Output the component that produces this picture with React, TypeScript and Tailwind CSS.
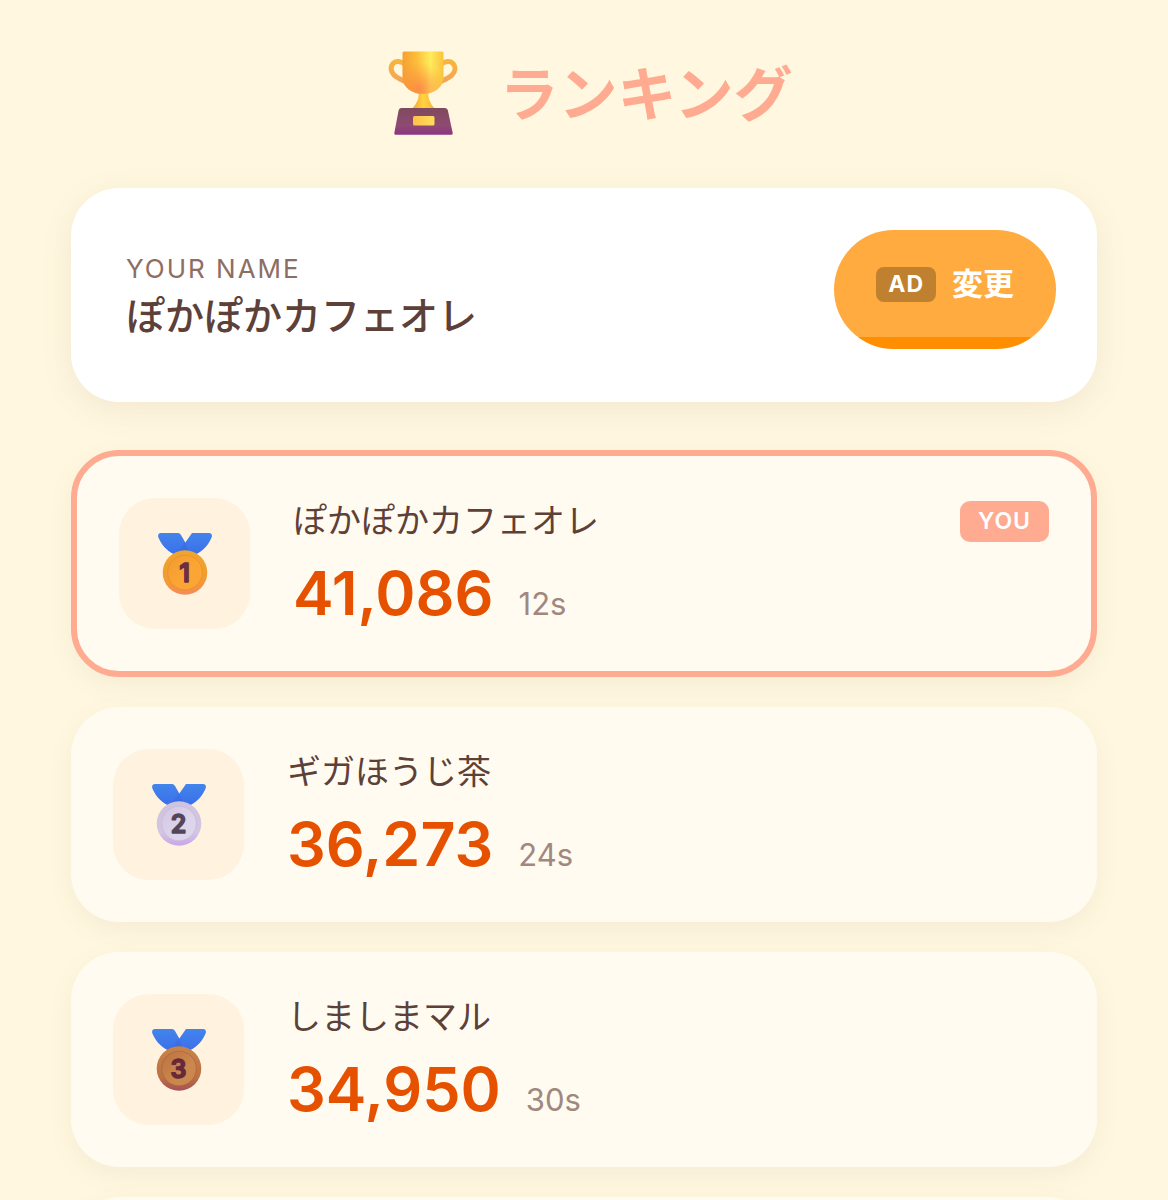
type Entry = {
    rank: number;
    name: string;
    score: number;
    seconds: number;
    you?: boolean;
};

const entries: Entry[] = [
    { rank: 1, name: "ぽかぽかカフェオレ", score: 41086, seconds: 12, you: true },
    { rank: 2, name: "ギガほうじ茶", score: 36273, seconds: 24 },
    { rank: 3, name: "しましまマル", score: 34950, seconds: 30 },
];

const medals = [
    { light: "#FBA634", dark: "#F39A32", rim: "#EFA52C", edge: "#F58A5A", line: "#E58A2C", digit: "#6B2F45" },
    { light: "#DDD5EA", dark: "#D3C6E4", rim: "#CFC3DD", edge: "#C9A4EC", line: "#C3B4D8", digit: "#53465A" },
    { light: "#CB874D", dark: "#BC7142", rim: "#C98347", edge: "#A64F58", line: "#A5603A", digit: "#66293A" },
];

function Trophy() {
    return (
        <svg viewBox="0 0 68 84" className="h-[84px] w-24 shrink-0" aria-hidden="true">
            <defs>
                <linearGradient id="cup" x1="0" y1="0" x2="1" y2="0">
                    <stop offset="0" stopColor="#F5A032" />
                    <stop offset="0.35" stopColor="#FDBE3A" />
                    <stop offset="0.68" stopColor="#FFEC5C" />
                    <stop offset="1" stopColor="#FBC23C" />
                </linearGradient>
                <radialGradient id="cupShade" cx="0.4" cy="0.9" r="0.65">
                    <stop offset="0" stopColor="#FA8248" stopOpacity="0.85" />
                    <stop offset="1" stopColor="#FA8A40" stopOpacity="0" />
                </radialGradient>
                <linearGradient id="handle" x1="0" y1="0" x2="0" y2="1">
                    <stop offset="0" stopColor="#F7B53C" />
                    <stop offset="1" stopColor="#F5A455" />
                </linearGradient>
                <linearGradient id="stem" x1="0" y1="0" x2="1" y2="0">
                    <stop offset="0" stopColor="#F8A437" />
                    <stop offset="0.5" stopColor="#FFD23F" />
                    <stop offset="1" stopColor="#F9B13B" />
                </linearGradient>
                <linearGradient id="base" x1="0" y1="0" x2="0" y2="1">
                    <stop offset="0" stopColor="#7F4A5D" />
                    <stop offset="0.65" stopColor="#8F4A72" />
                    <stop offset="1" stopColor="#8A3485" />
                </linearGradient>
                <linearGradient id="plate" x1="0" y1="0" x2="1" y2="0">
                    <stop offset="0" stopColor="#FFC04A" />
                    <stop offset="1" stopColor="#FFDE5A" />
                </linearGradient>
            </defs>
            <path d="M16 13C12 10 7 9.500 4.500 12C1 15.500 1.500 20.500 5 24C8 27 12 28.500 17 31" fill="none" stroke="url(#handle)" strokeWidth="5" strokeLinecap="round" />
            <path d="M52 13C56 10 61 9.500 63.500 12C67 15.500 66.500 20.500 63 24C60 27 56 28.500 51 31" fill="none" stroke="url(#handle)" strokeWidth="5" strokeLinecap="round" />
            <path d="M29.500 40H39.500C38.500 47 41 52 46 58H23C28 52 30.500 47 29.500 40Z" fill="url(#stem)" />
            <path d="M13.500 2Q13.500.5 15 .5H53Q54.500.5 54.500 2V26C54.500 36 45.500 43 34 43S13.500 36 13.500 26Z" fill="url(#cup)" />
            <path d="M13.500 2Q13.500.5 15 .5H53Q54.500.5 54.500 2V26C54.500 36 45.500 43 34 43S13.500 36 13.500 26Z" fill="url(#cupShade)" />
            <path d="M12.500 57H55.500Q58.500 57 59 60L63.700 82Q64 83.700 62.500 83.700H6.500Q5 83.700 5.300 82L9.500 60Q10 57 12.500 57Z" fill="url(#base)" />
            <rect x="24" y="65" width="21.500" height="9.500" rx="1.500" fill="url(#plate)" />
        </svg>
    );
}

function Medal({ rank }: { rank: number }) {
    const c = medals[rank - 1];
    return (
        <svg viewBox="0 0 54 62" className="h-[62px] w-[54px]" role="img" aria-label={`Rank ${rank}`}>
            <defs>
                <linearGradient id={`ribbon${rank}`} x1="0" y1="0" x2="0" y2="1">
                    <stop offset="0" stopColor="#4385EC" />
                    <stop offset="1" stopColor="#3B6FEA" />
                </linearGradient>
                <linearGradient id={`rim${rank}`} x1="0" y1="0" x2="0" y2="1">
                    <stop offset="0" stopColor={c.rim} />
                    <stop offset="0.7" stopColor={c.dark} />
                    <stop offset="1" stopColor={c.edge} />
                </linearGradient>
                <linearGradient id={`face${rank}`} x1="0" y1="0" x2="1" y2="1">
                    <stop offset="0" stopColor={c.dark} />
                    <stop offset="0.6" stopColor={c.light} />
                    <stop offset="1" stopColor={c.light} />
                </linearGradient>
            </defs>
            <path d="M34 0H51Q54.500 0 53.800 4C51 11 46 17 38.500 21H16L27 10Z" fill={`url(#ribbon${rank})`} />
            <path d="M3 0H20Q22 0 23 2L27 9L31 13L21 21H15.500C8 17 3 11 .2 4Q-.4 0 3 0Z" fill={`url(#ribbon${rank})`} />
            <path d="M27 9.500L20 19H31Z" fill="#3564DC" opacity="0.4" />
            <circle cx="27" cy="39.500" r="22.300" fill={`url(#rim${rank})`} />
            <circle cx="27" cy="39.500" r="17.300" fill={`url(#face${rank})`} stroke={c.line} strokeOpacity="0.6" strokeWidth="1" />
            <text
                x="26.500"
                y="48.500"
                textAnchor="middle"
                fontSize="25"
                fill={c.digit}
                stroke={c.digit}
                strokeWidth="1.500"
                strokeLinejoin="round"
                className="font-['Inter',sans-serif] font-semibold"
            >
                {rank}
            </text>
        </svg>
    );
}

function NameCard() {
    return (
        <section className="flex items-start justify-between rounded-[48px] bg-white pt-[42px] pr-[41px] pb-[53px] pl-[55px] shadow-[0_8px_32px_rgba(141,110,99,0.10)]">
            <div className="pt-6">
                <p className="text-[26px] leading-[30px] tracking-[2px] text-[#8D6E63]">YOUR NAME</p>
                <p className="mt-2 text-[39px] leading-[48px] font-medium text-[#5D4037]">ぽかぽかカフェオレ</p>
            </div>
            <button
                type="button"
                className="flex items-center gap-4 rounded-full bg-[linear-gradient(to_top,#FF8F00_12px,#FFAB40_12px)] px-[42px] pt-[30px] pb-[41px] text-white"
            >
                <span className="rounded-lg bg-black/25 px-3 text-[23px] leading-[35px] font-bold tracking-[1px]">AD</span>
                <span className="text-[31px] leading-[48px] font-bold">変更</span>
            </button>
        </section>
    );
}

function Row({ entry }: { entry: Entry }) {
    return (
        <li
            className={`flex items-start gap-[43px] rounded-[48px] bg-[#FFFBF0] p-[42px] shadow-[0_8px_24px_rgba(141,110,99,0.08)] ${
                entry.you ? "border-[6px] border-[#FFAB91]" : ""
            }`}
        >
            <div className="flex size-[131px] shrink-0 items-center justify-center rounded-[36px] bg-[#FFF2DF]">
                <Medal rank={entry.rank} />
            </div>
            <div className="flex-1">
                <div className="flex items-center justify-between">
                    <h2 className="text-[34px] leading-[46px] text-[#5D4037]">{entry.name}</h2>
                    {entry.you && (
                        <span className="rounded-[10px] bg-[#FFAB91] px-[18px] text-[23px] leading-[41px] font-semibold tracking-[1px] text-white">
                            YOU
                        </span>
                    )}
                </div>
                <p className="mt-4 flex items-baseline gap-[25px]">
                    <span className="text-[61px] leading-[66px] font-semibold text-[#E65100]">
                        {entry.score.toLocaleString("en-US")}
                    </span>
                    <span className="text-[31px] leading-8 text-[#A1887F]">{entry.seconds}s</span>
                </p>
            </div>
        </li>
    );
}

export default function App() {
    return (
        <main className="h-screen overflow-hidden bg-[#FFF7DF] px-[71px] pt-12 font-['Inter','Noto_Sans_CJK_JP',sans-serif]">
            <header className="flex h-[90px] items-center justify-center gap-7">
                <Trophy />
                <h1 className="pt-1 text-[59px] leading-[72px] font-bold text-[#FFAB91]">ランキング</h1>
            </header>
            <div className="mt-[50px]">
                <NameCard />
                <ol className="mt-12 flex flex-col gap-[30px]">
                    {entries.map((entry) => (
                        <Row key={entry.rank} entry={entry} />
                    ))}
                    <li className="h-[215px] rounded-[48px] bg-[#FFFBF0] shadow-[0_8px_24px_rgba(141,110,99,0.08)]" />
                </ol>
            </div>
        </main>
    );
}
